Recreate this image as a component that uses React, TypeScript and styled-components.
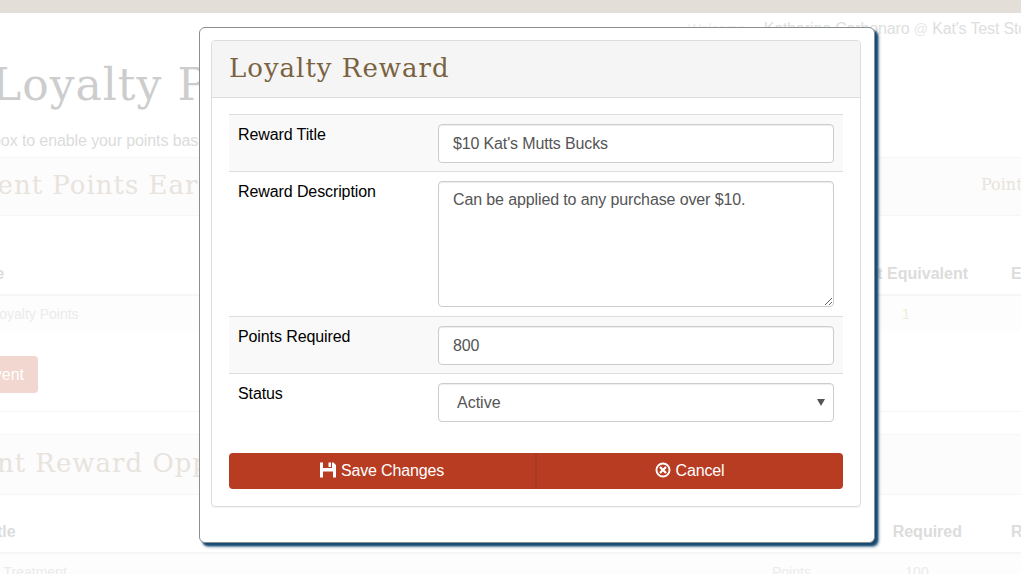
import React from "react";
import styled, { createGlobalStyle } from "styled-components";

const GlobalStyle = createGlobalStyle`
  html, body {
    margin: 0;
    padding: 0;
    height: 100%;
    overflow: hidden;
    background: #fff;
    font-family: "Liberation Sans", Arial, sans-serif;
  }
  * { box-sizing: border-box; }
`;

const slab = `"DejaVu Serif", "Liberation Serif", serif`;

const Viewport = styled.div`
  position: relative;
  width: 1021px;
  height: 574px;
  overflow: hidden;
`;

const TopBar = styled.div`
  height: 13px;
  background: #e3dfd8;
`;

// the page behind the dialog sticks out on both sides of the window
const Page = styled.div`
  width: 1140px;
  margin-left: -60px;
`;

const UserLine = styled.div`
  display: flex;
  justify-content: flex-end;
  gap: 19px;
  padding: 7px 39px 0 0;
  height: 32px;
  font-size: 16px;
  line-height: 18px;
  letter-spacing: -0.15px;
  color: #dedede;
  white-space: nowrap;
`;

const Welcome = styled.span`
  color: #efefef;
  font-size: 14px;
`;

const AtSign = styled.span`
  color: #e8e8e8;
  font-size: 14px;
`;

const PageTitle = styled.h1`
  margin: 0;
  height: 65px;
  padding: 15px 0 0 52px;
  font: 400 44px/50px ${slab};
  letter-spacing: 1px;
  color: #cdcdcd;
  white-space: nowrap;
`;

const Intro = styled.p`
  margin: 0 0 0 -26px;
  height: 47px;
  padding: 21px 0 0 0;
  font-size: 16px;
  line-height: 20px;
  letter-spacing: -0.1px;
  color: #dcdcdc;
  white-space: nowrap;
`;

const SectionHead = styled.div`
  display: flex;
  justify-content: space-between;
  height: ${p => p.$height}px;
  margin-top: ${p => p.$gap}px;
  padding-top: ${p => (p.$height - 37) / 2}px;
  background: #fcfcfc;
  border-top: 1px solid #f6f6f6;
  border-bottom: 1px solid #f6f6f6;
  font: 400 26px/32px ${slab};
  letter-spacing: 1px;
  color: #e8e3dc;
  white-space: nowrap;
`;

const SectionTitle = styled.span`
  margin-left: ${p => p.$shift}px;
`;

const SectionAside = styled.span`
  width: 99px;
  overflow: hidden;
  font-size: 16px;
  letter-spacing: 0;
`;

const Columns = styled.div`
  display: grid;
  grid-template-columns: ${p => p.$columns};
  white-space: nowrap;
`;

const HeadCell = styled.div`
  height: ${p => p.$height}px;
  padding: 0 ${p => p.$right || 0}px 11px ${p => p.$left || 0}px;
  display: flex;
  align-items: flex-end;
  justify-content: ${p => (p.$end ? "flex-end" : "flex-start")};
  font-size: 16px;
  font-weight: 700;
  line-height: 18px;
  color: #dcdcdc;
  border-bottom: 2px solid #f6f6f6;
`;

const BodyCell = styled.div`
  height: 35px;
  padding: 0 ${p => p.$right || 0}px 0 ${p => p.$left || 0}px;
  display: flex;
  align-items: center;
  justify-content: ${p => (p.$center ? "center" : "flex-start")};
  background: #fdfdfd;
  font-size: 14px;
  color: ${p => p.$tone || "#ebebeb"};
`;

const FadedButton = styled.div`
  width: 98px;
  height: 37px;
  margin-top: 25px;
  border-radius: 4px;
  background: #f2d6d0;
  color: #fff;
  font-size: 16px;
  line-height: 37px;
  text-align: right;
  padding-right: 14px;
`;

const Rule = styled.div`
  margin-top: 18px;
  height: 1px;
  background: #f6f6f6;
`;

const Backdrop = styled.div`
  position: absolute;
  inset: 0;
`;

const Dialog = styled.div`
  position: absolute;
  left: 199px;
  top: 27px;
  width: 676px;
  height: 516px;
  padding: 12px 13px 0 11px;
  background: #fff;
  border: 1px solid #8a8f92;
  border-radius: 6px;
  box-shadow: 3px 3px 2px #174a72, 4px 4px 3px rgba(23, 74, 114, 0.5);
`;

const Panel = styled.div`
  width: 650px;
  height: 467px;
  border: 1px solid #ddd;
  border-radius: 4px;
  box-shadow: 0 1px 1px rgba(0, 0, 0, 0.05);
  overflow: hidden;
`;

const PanelHead = styled.div`
  height: 57px;
  padding: 0 17px;
  background: #f5f5f5;
  border-bottom: 1px solid #ddd;
  font: 400 26px/54px ${slab};
  letter-spacing: 1px;
  color: #7a6240;
  white-space: nowrap;
`;

const PanelBody = styled.div`
  padding: 16px 17px 0;
`;

const FormRow = styled.div`
  display: flex;
  padding: 9px 9px 8px;
  border-top: 1px solid #ddd;
  background: ${p => (p.$shaded ? "#f9f9f9" : "#fff")};
`;

const FieldLabel = styled.label`
  width: 200px;
  flex: none;
  padding-top: 1px;
  font-size: 16px;
  line-height: 20px;
  letter-spacing: -0.1px;
  color: #000;
`;

const TextInput = styled.input`
  display: block;
  width: 396px;
  height: 39px;
  padding: 0 14px;
  border: 1px solid #ccc;
  border-radius: 4px;
  background: #fff;
  font: 16px "Liberation Sans", Arial, sans-serif;
  letter-spacing: -0.14px;
  color: #555;
  box-shadow: inset 0 1px 1px rgba(0, 0, 0, 0.075);
`;

const TextArea = styled.textarea`
  display: block;
  width: 396px;
  height: 126px;
  margin-bottom: 1px;
  padding: 8px 14px;
  border: 1px solid #ccc;
  border-radius: 4px;
  background: #fff;
  font: 16px/20px "Liberation Sans", Arial, sans-serif;
  letter-spacing: -0.12px;
  color: #555;
  box-shadow: inset 0 1px 1px rgba(0, 0, 0, 0.075);
`;

const SelectWrap = styled.div`
  position: relative;
  width: 396px;
`;

const SelectBox = styled.select`
  display: block;
  appearance: none;
  width: 100%;
  height: 39px;
  padding: 0 18px;
  border: 1px solid #ccc;
  border-radius: 4px;
  background: #fff;
  font: 16px "Liberation Sans", Arial, sans-serif;
  color: #555;
  box-shadow: inset 0 1px 1px rgba(0, 0, 0, 0.075);
`;

const SelectArrow = styled.span`
  position: absolute;
  right: 9px;
  top: 16px;
  width: 0;
  height: 0;
  border-left: 4px solid transparent;
  border-right: 4px solid transparent;
  border-top: 7px solid #555;
  pointer-events: none;
`;

const ButtonGroup = styled.div`
  display: flex;
  margin-top: 23px;
`;

const ActionButton = styled.button`
  flex: 1 1 0;
  height: 36px;
  padding: 0;
  display: flex;
  align-items: center;
  justify-content: center;
  gap: 5px;
  border: 0;
  border-left: ${p => (p.$first ? "0" : "2px solid #a83820")};
  background: #b73c22;
  color: #fff;
  font: 16px/20px "Liberation Sans", Arial, sans-serif;
  letter-spacing: -0.15px;
  border-radius: ${p => (p.$first ? "4px 0 0 4px" : "0 4px 4px 0")};
`;

const Glyph = styled.svg`
  width: 16px;
  height: 16px;
  margin-top: -3px;
  margin-left: ${p => p.$nudge || 0}px;
  fill: #fff;
`;

function SaveIcon() {
  return (
    <Glyph viewBox="0 0 16 16">
      <path
        fillRule="evenodd"
        d="M0 .5h3v5.500h9V.5h1.500L16 3v12.500H0zM8.500 .5H11V5H8.500zM3 9.500v6h10v-6z"
      />
    </Glyph>
  );
}

function CancelIcon() {
  return (
    <Glyph viewBox="0 0 16 16" $nudge={-1}>
      <path
        fillRule="evenodd"
        d="M8 .5a7.500 7.500 0 1 1 0 15 7.500 7.500 0 0 1 0-15zM8 2.400a5.600 5.600 0 1 0 0 11.200A5.600 5.600 0 0 0 8 2.400z"
      />
      <path d="M5.800 4.200L8 6.400l2.200-2.200 1.600 1.600L9.600 8l2.200 2.200-1.600 1.600L8 9.600l-2.200 2.200-1.600-1.600L6.400 8 4.200 5.800z" />
    </Glyph>
  );
}

function BackgroundPage() {
  return (
    <Page>
      <UserLine>
        <Welcome>Welcome</Welcome>
        <span>
          Katharine Carbonaro <AtSign>@</AtSign> Kat's Test Store
        </span>
      </UserLine>
      <PageTitle>Loyalty Program</PageTitle>
      <Intro>Check this box to enable your points based loyalty program</Intro>
      <SectionHead $height={59} $gap={0}>
        <SectionTitle $shift={-8}>Current Points Earning Events</SectionTitle>
        <SectionAside>Points Earned</SectionAside>
      </SectionHead>
      <Columns $columns="890px 181px 1fr">
        <HeadCell $height={80} $left={28}>Type</HeadCell>
        <HeadCell $height={80} $end $right={43}>Point Equivalent</HeadCell>
        <HeadCell $height={80}>Edit</HeadCell>
        <BodyCell $left={18}>Earn Loyalty Points</BodyCell>
        <BodyCell $center $right={29} $tone="#f0ecd8">1</BodyCell>
        <BodyCell />
      </Columns>
      <FadedButton>Add Event</FadedButton>
      <Rule />
      <SectionHead $height={61} $gap={22}>
        <SectionTitle $shift={-25}>Current Reward Opportunities</SectionTitle>
      </SectionHead>
      <Columns $columns="832px 108px 131px 1fr">
        <HeadCell $height={59} $left={43}>Title</HeadCell>
        <HeadCell $height={59}>Type</HeadCell>
        <HeadCell $height={59} $end $right={49}>Required</HeadCell>
        <HeadCell $height={59}>Remove</HeadCell>
        <BodyCell $left={35}>Spa Treatment</BodyCell>
        <BodyCell>Points</BodyCell>
        <BodyCell $center $right={57}>100</BodyCell>
        <BodyCell />
      </Columns>
    </Page>
  );
}

export default function App() {
  return (
    <Viewport>
      <GlobalStyle />
      <TopBar />
      <BackgroundPage />
      <Backdrop>
        <Dialog>
          <Panel>
            <PanelHead>Loyalty Reward</PanelHead>
            <PanelBody>
              <FormRow $shaded>
                <FieldLabel>Reward Title</FieldLabel>
                <TextInput defaultValue="$10 Kat's Mutts Bucks" />
              </FormRow>
              <FormRow>
                <FieldLabel>Reward Description</FieldLabel>
                <TextArea defaultValue="Can be applied to any purchase over $10." />
              </FormRow>
              <FormRow $shaded>
                <FieldLabel>Points Required</FieldLabel>
                <TextInput defaultValue="800" />
              </FormRow>
              <FormRow>
                <FieldLabel>Status</FieldLabel>
                <SelectWrap>
                  <SelectBox defaultValue="active">
                    <option value="active">Active</option>
                    <option value="inactive">Inactive</option>
                  </SelectBox>
                  <SelectArrow />
                </SelectWrap>
              </FormRow>
              <ButtonGroup>
                <ActionButton $first>
                  <SaveIcon />
                  Save Changes
                </ActionButton>
                <ActionButton>
                  <CancelIcon />
                  Cancel
                </ActionButton>
              </ButtonGroup>
            </PanelBody>
          </Panel>
        </Dialog>
      </Backdrop>
    </Viewport>
  );
}
